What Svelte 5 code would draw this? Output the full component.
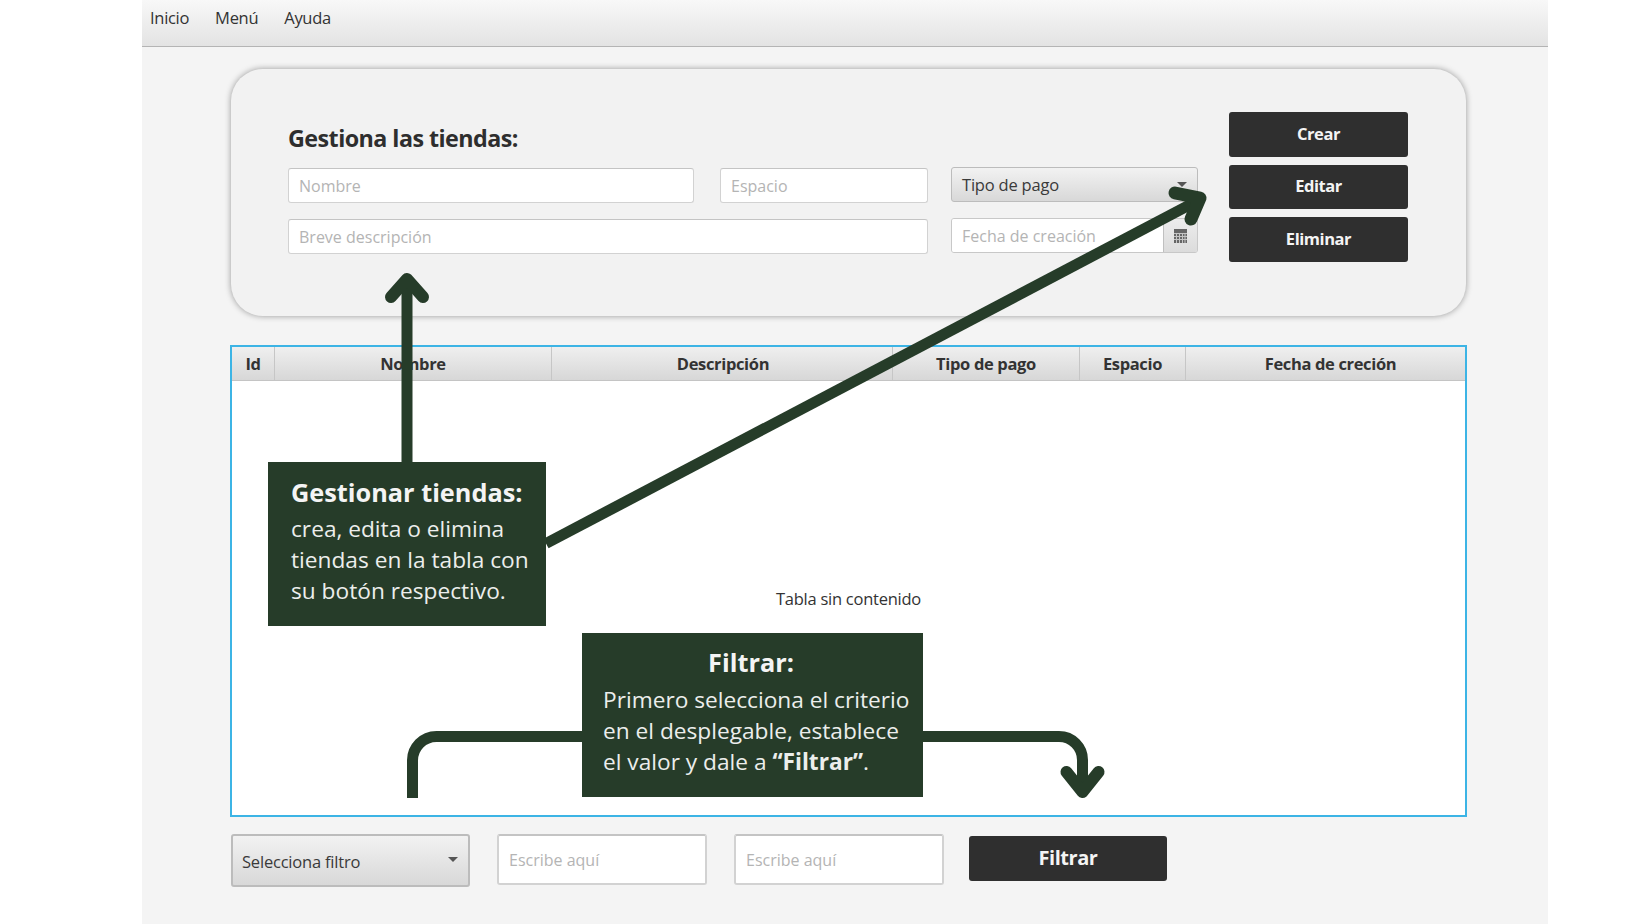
<script>
	const menus = ["Inicio", "Menú", "Ayuda"];
	const columns = [
		{ title: "Id", width: 43 },
		{ title: "Nombre", width: 277 },
		{ title: "Descripción", width: 341 },
		{ title: "Tipo de pago", width: 187 },
		{ title: "Espacio", width: 106 },
		{ title: "Fecha de creción", width: 278 }
	];
	const actions = ["Crear", "Editar", "Eliminar"];
</script>

<div class="page">
	<div class="window">
		<nav class="menubar">
			{#each menus as menu}
				<span>{menu}</span>
			{/each}
		</nav>

		<section class="panel">
			<div class="form">
				<h2>Gestiona las tiendas:</h2>
				<div class="fields">
					<input class="field" placeholder="Nombre" />
					<input class="field" placeholder="Espacio" />
					<div class="combo small">
						<span>Tipo de pago</span>
						<i class="caret"></i>
					</div>
					<input class="field wide" placeholder="Breve descripción" />
					<div class="date">
						<input class="field" placeholder="Fecha de creación" />
						<div class="date_btn">
							<svg width="13" height="14" viewBox="0 0 13 14">
								<rect width="13" height="14" fill="#666" />
								<path d="M0 4.5H13M0 7.5H13M0 10.5H13M2.5 4V14M5.5 4V14M8.5 4V14M11 4V14" stroke="#c4c4c4" stroke-width="1" />
							</svg>
						</div>
					</div>
				</div>
			</div>
			<div class="actions">
				{#each actions as action}
					<button class="dark">{action}</button>
				{/each}
			</div>
		</section>

		<section class="table">
			<div class="thead">
				{#each columns as col}
					<div class="th" style="width: {col.width}px">{col.title}</div>
				{/each}
			</div>
			<div class="tbody">Tabla sin contenido</div>
		</section>

		<div class="filters">
			<div class="combo big">
				<span>Selecciona filtro</span>
				<i class="caret"></i>
			</div>
			<input class="field filter_input" placeholder="Escribe aquí" />
			<input class="field filter_input" placeholder="Escribe aquí" />
			<button class="dark filter_btn">Filtrar</button>
		</div>
	</div>

	<!-- annotations drawn over the screenshot -->
	<svg class="arrows" width="1640" height="924" viewBox="0 0 1640 924" fill="none" stroke="#263c29" stroke-width="11" stroke-linejoin="round">
		<path d="M407 462V282" />
		<path d="M391 297L407 279L423 297" stroke-width="12" stroke-linecap="round" />
		<path d="M546 543.5L1197 201" />
		<path d="M1175 193L1200 198L1191 219" stroke-width="13" stroke-linecap="round" />
		<path d="M412.5 798V761A24 24 0 0 1 436.5 736.5H582" />
		<path d="M923 736.5H1059A23.5 23.5 0 0 1 1082.5 760V788" />
		<path d="M1066.5 772L1082.5 792L1098.5 772" stroke-width="12" stroke-linecap="round" />
	</svg>

	<div class="note note_left">
		<strong>Gestionar tiendas:</strong>
		<p>crea, edita o elimina<br />tiendas en la tabla con<br />su botón respectivo.</p>
	</div>
	<div class="note note_right">
		<strong>Filtrar:</strong>
		<p>Primero selecciona el criterio<br />en el desplegable, establece<br />el valor y dale a <b>“Filtrar”</b>.</p>
	</div>
</div>

<style>
	:global(body) {
		margin: 0;
		background: #fff;
	}
	.page {
		position: relative;
		width: 1640px;
		height: 924px;
		overflow: hidden;
		font-family: "Open Sans", "Noto Sans", sans-serif;
		color: #333;
	}
	.window {
		margin-left: 142px;
		width: 1406px;
		height: 924px;
		background: #f4f4f4;
		overflow: hidden;
	}
	.menubar {
		display: flex;
		gap: 26px;
		box-sizing: border-box;
		height: 47px;
		padding: 7px 0 0 8px;
		font-size: 16.5px;
		line-height: 22px;
		letter-spacing: -0.3px;
		background: linear-gradient(#f8f8f8, #e3e3e3);
		border-bottom: 1px solid #b4b4b4;
	}
	.panel {
		display: flex;
		box-sizing: border-box;
		margin: 22px 0 0 89px;
		width: 1235px;
		height: 247px;
		padding: 43px 0 0 57px;
		background: #f2f2f2;
		border-radius: 32px;
		box-shadow: 0 0 6px rgba(0, 0, 0, 0.38);
	}
	.form {
		width: 909px;
	}
	h2 {
		margin: 0 0 3px;
		height: 53px;
		font-size: 23.3px;
		line-height: 52px;
		font-weight: 700;
		letter-spacing: -0.55px;
		color: #2e2e2e;
	}
	.fields {
		display: grid;
		grid-template-columns: 406px 208px 244px;
		column-gap: 26px;
		row-gap: 16px;
		align-items: start;
	}
	.fields > :nth-child(3),
	.fields > :nth-child(5) {
		margin-left: -3px;
		margin-top: -1px;
	}
	.field {
		display: block;
		box-sizing: border-box;
		margin: 0;
		width: 100%;
		height: 35px;
		padding: 0 10px;
		background: #fff;
		border: 1.5px solid #d2d2d2;
		border-top-color: #c4c4c4;
		border-radius: 3px;
		outline: none;
		font-family: inherit;
		font-size: 16px;
		letter-spacing: 0;
	}
	.field::placeholder {
		color: #b4b4b4;
		opacity: 1;
	}
	.wide {
		grid-column: span 2;
	}
	.combo {
		display: flex;
		align-items: center;
		justify-content: space-between;
		box-sizing: border-box;
		background: linear-gradient(#f2f2f2, #d8d8d8);
		border: 1.5px solid #bcbcbc;
		border-radius: 3px;
		font-size: 16.5px;
		letter-spacing: -0.2px;
		color: #3a3a3a;
	}
	.small {
		height: 35px;
		padding: 0 10px;
	}
	.big {
		width: 239px;
		height: 53px;
		padding: 1px 10px 0 9px;
		border-width: 2px;
	}
	.big .caret {
		margin-top: -4px;
	}
	.caret {
		width: 0;
		height: 0;
		border-left: 5.5px solid transparent;
		border-right: 5.5px solid transparent;
		border-top: 5px solid #555;
	}
	.date {
		display: flex;
		box-sizing: border-box;
		height: 35px;
		border: 1.5px solid #c8c8c8;
		border-radius: 3px;
		overflow: hidden;
	}
	.date .field {
		flex: 1;
		min-width: 0;
		height: 100%;
		border: none;
		border-radius: 0;
	}
	.date_btn {
		display: flex;
		align-items: center;
		justify-content: center;
		flex: none;
		width: 33px;
		background: linear-gradient(#ececec, #dcdcdc);
		border-left: 1px solid #c0c0c0;
	}
	.actions {
		display: flex;
		flex-direction: column;
		gap: 8px;
		margin-left: 32px;
		width: 179px;
	}
	.dark {
		box-sizing: border-box;
		height: 44.5px;
		padding: 0 0 2px;
		background: #2f2f2f;
		border: none;
		border-radius: 3px;
		color: #f4f4f4;
		font-family: inherit;
		font-size: 16.5px;
		font-weight: 700;
		letter-spacing: -0.45px;
	}
	.table {
		display: flex;
		flex-direction: column;
		box-sizing: border-box;
		margin: 29px 0 0 88px;
		width: 1237px;
		height: 472px;
		background: #fff;
		border: 2px solid #3cb4e5;
	}
	.thead {
		display: flex;
		flex: none;
		height: 33px;
		background: linear-gradient(#efefef, #d7d7d7);
		border-bottom: 1px solid #c4c4c4;
	}
	.th {
		flex: none;
		box-sizing: border-box;
		border-right: 1px solid #c6c6c6;
		text-align: center;
		font-size: 16.5px;
		line-height: 33px;
		font-weight: 700;
		letter-spacing: -0.35px;
		color: #333;
	}
	.th:nth-child(3) {
		padding-left: 2px;
	}
	.th:last-child {
		padding-left: 11px;
		border-right: none;
	}
	.tbody {
		flex: 1;
		display: flex;
		align-items: center;
		justify-content: center;
		font-size: 16.5px;
		letter-spacing: -0.25px;
		color: #333;
	}
	.filters {
		display: flex;
		align-items: flex-start;
		margin: 17px 0 0 89px;
	}
	.filter_input {
		width: 210px;
		height: 51px;
		margin-left: 27px;
		border-width: 2px;
	}
	.filter_btn {
		width: 198px;
		height: 45px;
		margin: 2px 0 0 25px;
		font-size: 20px;
	}
	.arrows {
		position: absolute;
		top: 0;
		left: 0;
		pointer-events: none;
	}
	.note {
		position: absolute;
		box-sizing: border-box;
		background: #263c29;
		color: #f4f4f4;
	}
	.note strong {
		display: block;
		font-size: 25.3px;
		font-weight: 700;
		line-height: 34px;
	}
	.note p {
		margin: 0;
		font-size: 22.7px;
		line-height: 31px;
		color: #eceeec;
	}
	.note b {
		font-weight: 700;
	}
	.note_left {
		left: 268px;
		top: 462px;
		width: 278px;
		height: 164px;
		padding: 13px 0 0 23px;
	}
	.note_left p {
		margin-top: 4px;
	}
	.note_right {
		left: 582px;
		top: 633px;
		width: 341px;
		height: 164px;
		padding: 12px 0 0 21px;
	}
	.note_right strong {
		text-align: center;
		margin-left: -24px;
	}
	.note_right p {
		margin-top: 5px;
	}
</style>
